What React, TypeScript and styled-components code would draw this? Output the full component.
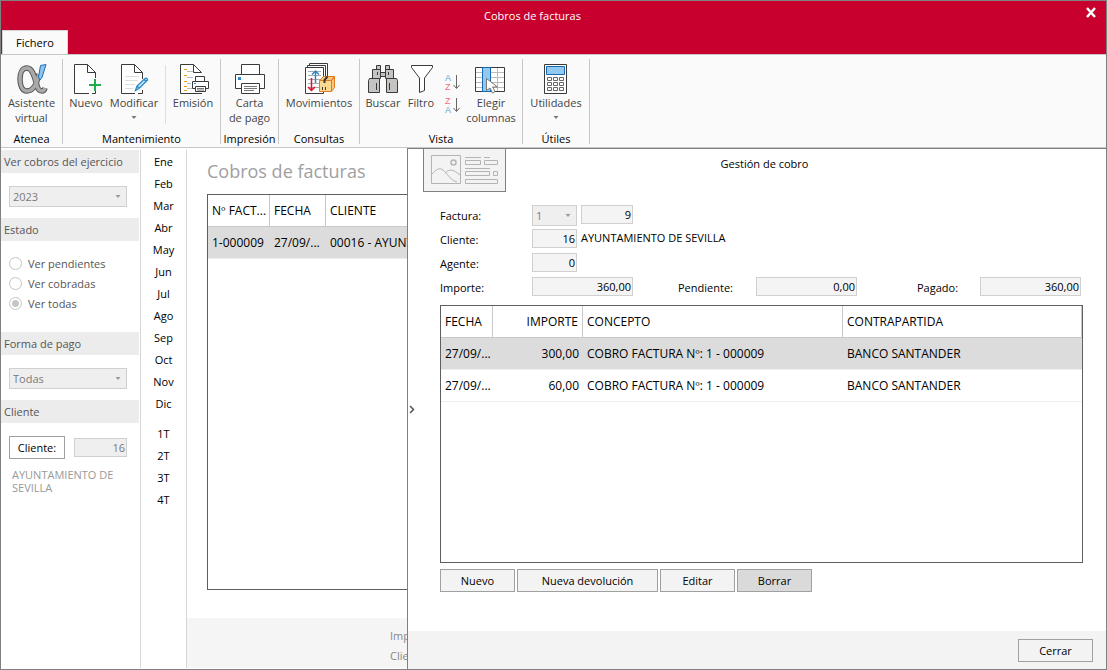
import React, { ReactNode } from 'react';
import styled, { createGlobalStyle } from 'styled-components';

const line = '#c8c8c8';
const frame = '#808080';
const ink = '#3a3a3a';

const GlobalStyle = createGlobalStyle`
  * { box-sizing: border-box; }
  body { margin: 0; }
  body, button, input, select {
    font-family: "Open Sans", "Noto Sans", sans-serif;
    font-size: 11px;
    line-height: 15px;
    color: #000;
  }
`;

const Window = styled.div`
  display: flex;
  flex-direction: column;
  min-height: 100vh;
  border: 1px solid ${frame};
  background: #fff;
`;

/* ---------- title bar and ribbon ---------- */

const TitleBar = styled.header`
  display: grid;
  grid-template-columns: 1fr auto 1fr;
  grid-template-rows: 29px 24px;
  background: #c8002d;
`;

const WindowTitle = styled.h1`
  grid-column: 2;
  margin: 0;
  padding-right: 42px;
  font-size: 11px;
  font-weight: 400;
  line-height: 29px;
  color: #fff;
`;

const CloseButton = styled.button`
  grid-column: 3;
  justify-self: end;
  align-self: start;
  display: flex;
  padding: 6px 9px;
  border: 0;
  background: none;
`;

const Tab = styled.button`
  grid-column: 1;
  grid-row: 2;
  justify-self: start;
  width: 66px;
  margin-left: 1px;
  border: 1px solid #d8d0d2;
  border-bottom: 0;
  background: #fafafa;
  padding: 0;
`;

const Ribbon = styled.div`
  display: flex;
  height: 94px;
  padding-top: 4px;
  border-top: 1px solid ${line};
  border-bottom: 1px solid ${line};
  background: #fafafa;
`;

const Group = styled.section`
  display: flex;
  flex-direction: column;
  justify-content: space-between;
  height: 85px;
  border-right: 1px solid ${line};
`;

const Tools = styled.div<{ $end?: number }>`
  display: flex;
  padding-top: 4px;
  padding-right: ${p => p.$end ?? 0}px;
`;

const GroupName = styled.h2`
  margin: 0;
  font-size: 11px;
  font-weight: 400;
  line-height: 11px;
  text-align: center;
  white-space: nowrap;
`;

const Tool = styled.button<{ $w: number }>`
  display: flex;
  flex-direction: column;
  align-items: center;
  width: ${p => p.$w}px;
  padding: 0;
  border: 0;
  background: none;
  color: #444;
  white-space: nowrap;
`;

const ToolSplit = styled.div`
  width: 1px;
  height: 59px;
  margin: 2px 0 0 6px;
  background: #dedede;
`;

const SortTools = styled.div`
  display: flex;
  flex-direction: column;
  align-items: center;
  gap: 5px;
  width: 31px;
  padding-top: 10px;
`;

const SortTool = styled.button`
  display: flex;
  padding: 0;
  border: 0;
  background: none;
`;

const Caret = () => (
  <svg width="7" height="15" viewBox="0 0 7 15"><path d="M.5 6h5L3 9z" fill="#777" /></svg>
);

/* ---------- body ---------- */

const Body = styled.div`
  flex: 1;
  display: grid;
  grid-template-columns: 140px 46px 220px minmax(0, 1fr);
`;

const Filters = styled.aside`
  margin: 2px 0 1px;
  border-right: 1px solid #d6d6d6;
`;

const FilterTitle = styled.h2`
  margin: 0 1px 0 0;
  padding-left: 3px;
  background: #ececec;
  font-size: 11px;
  font-weight: 400;
  line-height: 23px;
  color: #555;
`;

const FilterBody = styled.div<{ $top?: number; $bottom?: number }>`
  padding: ${p => p.$top ?? 13}px 13px ${p => p.$bottom ?? 11}px 8px;
`;

const SelectBox = styled.div<{ $w?: number }>`
  position: relative;
  flex: none;
  width: ${p => (p.$w ? p.$w + 'px' : '100%')};
  height: 21px;

  select {
    display: block;
    width: 100%;
    height: 100%;
    padding: 0 3px;
    border: 1px solid #d0d0d0;
    border-radius: 0;
    background: #efefef;
    color: #7a7a7a;
    opacity: 1;
    appearance: none;
  }

  svg {
    position: absolute;
    top: 3px;
    right: 5px;
    opacity: 0.7;
    pointer-events: none;
  }
`;

const RadioRow = styled.label`
  display: flex;
  align-items: center;
  gap: 6px;
  height: 20px;
  color: #555;
`;

const Radio = styled.input`
  appearance: none;
  width: 13px;
  height: 13px;
  margin: 0;
  border: 1px solid #c4c4c4;
  border-radius: 50%;
  background: #fff;

  &:checked {
    background: radial-gradient(circle, #c6c6c6 0 3px, #fff 4px);
  }
`;

const ClientRow = styled.div`
  display: flex;
  align-items: center;
  justify-content: space-between;
`;

const Button = styled.button<{ $w: number; $bg?: string }>`
  width: ${p => p.$w}px;
  height: 23px;
  padding: 0;
  border: 1px solid #a0a0a0;
  background: ${p => p.$bg ?? '#f3f3f3'};
`;

const Field = styled.input<{ $w: number; $muted?: boolean }>`
  flex: none;
  width: ${p => p.$w}px;
  height: 19px;
  padding: 0 1px 1px;
  border: 1px solid #d0d0d0;
  background: ${p => (p.$muted ? '#efefef' : '#f4f4f4')};
  color: ${p => (p.$muted ? '#7a7a7a' : '#000')};
  text-align: right;
`;

const ClientName = styled.p`
  margin: 9px 0 0 3px;
  line-height: 13px;
  color: #999;
`;

const Periods = styled.nav`
  display: flex;
  flex-direction: column;
  margin: 2px 0 1px;
  padding-top: 1px;
  border-right: 1px solid #d6d6d6;
  text-align: center;
`;

const Period = styled.a`
  line-height: 22px;
  color: #000;
  text-decoration: none;

  &.quarter { margin-top: 8px; }
`;

/* ---------- invoice list ---------- */

const List = styled.main`
  display: flex;
  flex-direction: column;
  overflow: hidden;
  padding-bottom: 1px;
`;

const ListTitle = styled.h2`
  margin: 0;
  padding: 11px 0 10px 20px;
  font-size: 18px;
  font-weight: 400;
  line-height: 25px;
  color: #a0a0a0;
`;

const Grid = styled.div`
  flex: 1;
  border: 1px solid #5f5f5f;
  background: #fff;
`;

const ListGrid = styled(Grid)`
  width: 400px;
  margin: 0 0 28px 20px;
`;

const ListFooter = styled.footer`
  height: 50px;
  padding: 8px 0 0 203px;
  background: #f5f5f5;
  color: #888;
  line-height: 20px;
  white-space: nowrap;
`;

const Table = styled.table`
  width: 100%;
  table-layout: fixed;
  border-collapse: separate;
  border-spacing: 0;

  th, td {
    height: 32px;
    padding: 0 0 0 4px;
    font-size: 12px;
    font-weight: 400;
    line-height: 16px;
    text-align: left;
    white-space: nowrap;
  }
  th {
    border-right: 1px solid ${line};
    border-bottom: 1px solid ${line};
  }
  td { border-bottom: 1px solid #eee; }
  tr.selected td { background: #dcdcdc; }
  th.amount, td.amount {
    padding-right: 4px;
    text-align: right;
  }
`;

/* ---------- payment panel ---------- */

const Panel = styled.section`
  display: flex;
  flex-direction: column;
  border: solid ${frame};
  border-width: 1px 0 0 1px;
  background: #fff;
`;

const PanelMain = styled.div`
  flex: 1;
  display: grid;
  grid-template-columns: 15px minmax(0, 1fr);
`;

const Collapse = styled.button`
  align-self: center;
  display: flex;
  margin-top: 38px;
  padding: 0 1px;
  border: 0;
  background: none;
`;

const PanelContent = styled.div`
  display: flex;
  flex-direction: column;
`;

const PanelHead = styled.div`
  display: grid;
  grid-template-columns: 83px 1fr 83px;
  margin-bottom: 13px;
`;

const Picture = styled.div`
  height: 43px;
  border: 1px solid ${frame};
  border-top: 0;
  background: #f3f3f3;
`;

const PanelTitle = styled.h2`
  margin: 0;
  font-size: 11px;
  font-weight: 400;
  line-height: 30px;
  text-align: center;
`;

const Form = styled.form`
  flex: 1;
  display: flex;
  flex-direction: column;
  padding: 0 23px 39px 17px;
`;

const FormRow = styled.div`
  display: flex;
  height: 24px;
`;

const Label = styled.label<{ $w: number; $gap?: number }>`
  flex: none;
  width: ${p => p.$w}px;
  margin-left: ${p => p.$gap ?? 0}px;
  line-height: 22px;
`;

const FieldPair = styled.div`
  display: flex;
  gap: 4px;
`;

const Output = styled.output`
  line-height: 18px;
`;

const PaymentsGrid = styled(Grid)`
  margin-top: 4px;
`;

const Actions = styled.div`
  display: flex;
  gap: 2px;
  margin-top: 6px;
`;

const PanelFooter = styled.footer`
  display: flex;
  justify-content: flex-end;
  height: 38px;
  padding: 8px 13px 0 0;
  background: #f3f3f3;
`;

/* ---------- icons ---------- */

const Icon = ({ children }: { children: ReactNode }) => (
  <svg width="32" height="32" viewBox="0 0 32 32" fill="none" stroke={ink} strokeWidth="1">
    {children}
  </svg>
);

const alpha = 'M28 25c-1 4-6 4-7.500-1C18 16 16 5 10 5 5 5 3 10 3 16s2 12 7 12c6 0 10-8 12-17';

const AlphaIcon = () => (
  <Icon>
    <path d={alpha} stroke="#555" strokeWidth="5.500" transform="translate(1 0)" />
    <path d={alpha} stroke="#a9a9a9" strokeWidth="3.500" transform="translate(1 0)" />
    <path d="M24.500 2.500l5.500-1L26 14.500l-2 2.500-1.500-3z" fill="#8cc4ee" stroke="#1f6fb5" />
  </Icon>
);

const NewIcon = () => (
  <Icon>
    <path d="M19 30.500H4.500v-29h13l8 8V15M25.500 28v2.500H22" fill="#fff" />
    <path d="M17.500 1.500v8h8" />
    <path d="M25 16v12M19 22h12" stroke="#1fab4e" strokeWidth="2" />
  </Icon>
);

const EditIcon = () => (
  <Icon>
    <path d="M17 30.500H3.500v-29h13l8 8V16M24.500 27v3.500H20" fill="#fff" />
    <path d="M16.500 1.500v8h8" />
    <path d="M7 13.500h14M7 17.500h13M7 21.500h10M7 25.500h8" stroke="#ddd" />
    <path d="M17.500 27.500l1.500-4.500 8-7.500q2-1 2.500 1.500l-8 8zM19 23l2.500 2.500M26 16.500l2.500 2.500" fill="#c9e4f7" stroke="#2a87c8" strokeWidth="1.300" />
  </Icon>
);

const IssueIcon = () => (
  <Icon>
    <path d="M25 30.500H3.500v-29h13l8 8" fill="#fff" />
    <path d="M16.500 1.500v8h8" />
    <path d="M7 6.500h3M7 12.500h3M7 18.500h3M7 23.500h3M7 27.500h3" stroke="#f09a1a" />
    <path d="M10 8.500h6M10 14.500h6M10 20.500h4M10 25.500h5" stroke="#bbb" />
    <path d="M18.500 18.500v-5h9v5M18.500 25.500h-3v-7h16v7h-3" fill="#fff" />
    <path d="M18.500 23.500h10v5h-10z" fill="#fff" />
    <path d="M20 25.500h7M20 27h7" stroke="#777" />
    <path d="M17 20.500h2" stroke="#2a87c8" />
  </Icon>
);

const PrinterIcon = () => (
  <Icon>
    <path d="M7.500 11.500v-10h18v10M7.500 25.500h-6v-14h29v14h-5" fill="#fff" />
    <path d="M7.500 20.500h18v10h-18z" fill="#fff" />
    <path d="M10 23.500h13M10 25.500h13M10 27.500h10" stroke="#777" />
    <path d="M4 14h3v3H4z" fill="#2a87c8" stroke="none" />
  </Icon>
);

const MovesIcon = () => (
  <Icon>
    <path d="M6.500 3V.5h18V14M4.500 5V2.500h18V14" fill="#fff" />
    <path d="M2.500 4.500h18v26h-18z" fill="#fff" />
    <path d="M5 8.500h13M5 12.500h13M5 16.500h13M5 20.500h11M5 24.500h11" stroke="#aaa" />
    <path d="M12.500 20V8M9 11.500L12.500 8l3.500 3.500" stroke="#2a87c8" strokeWidth="1.500" />
    <path d="M8.500 15v12.500M5 24l3.500 3.500L12 24" stroke="#e0112d" strokeWidth="1.500" />
    <path d="M16.500 17.500l4-4h11l-3 4zM28.500 17.500l3-4v11l-3 4z" fill="#f9c67a" stroke="#e07a22" />
    <path d="M16.500 17.500h12v11h-12z" fill="#fbd88f" stroke="#e07a22" />
    <path d="M21.500 20v-3l3-3.500" strokeWidth="2" />
    <path d="M19.500 24v3M22.500 24v3" />
  </Icon>
);

const BinocularsIcon = () => (
  <Icon>
    <g fill="#c6c4c3">
      <path d="M9.500 2.500h4v4h-4zM18.500 2.500h4v4h-4zM13.500 9.500h5v4h-5z" />
      <path d="M5.500 6.500h8v9h-8zM18.500 6.500h8v9h-8z" />
      <path d="M2.500 15.500h10v14h-11v-12zM19.500 15.500h10l1 2v12h-11z" />
    </g>
    <path d="M9.500 20v7M22.500 20v7M10.500 9v3M21.500 9v3" />
  </Icon>
);

const FilterIcon = () => (
  <Icon>
    <path d="M6.500 2.500h21v2l-8 10.500v12.500l-5 2V15L6.500 4.500z" fill="#fff" />
  </Icon>
);

const SortIcon = ({ top, bottom }: { top: 'A' | 'Z'; bottom: 'A' | 'Z' }) => (
  <svg width="18" height="18" viewBox="0 0 18 18" fontFamily="Liberation Sans" fontSize="9">
    <text x="2" y="8" fill={top === 'A' ? '#5ba3d6' : '#f07078'}>{top}</text>
    <text x="2" y="17" fill={bottom === 'A' ? '#5ba3d6' : '#f07078'}>{bottom}</text>
    <path d="M13.500 2v13M10.500 12l3 3.500 3-3.500" fill="none" stroke="#666" />
  </svg>
);

const ColumnsIcon = () => (
  <Icon>
    <path d="M.5 4.500h29v24H.5z" fill="#fff" />
    <path d="M1 9.500h28M1 14.500h28M1 19.500h28M1 24.500h28M22.500 5v23" stroke="#bbb" />
    <path d="M7.500 4.500h8v24h-8z" fill="#92c9f1" stroke="#1769b3" />
    <path d="M11.500 15.500v12l3.500-2.500 2.500 5 2.500-1.500-2.500-4.500h5z" fill="#fff" stroke="#777" />
  </Icon>
);

const CalculatorIcon = () => (
  <Icon>
    <path d="M4.500 1.500h22v29h-22z" fill="#fff" />
    <path d="M6.500 3.500h18v8h-18z" fill="#92c9f1" stroke="#1769b3" />
    {[14.5, 19.5, 24.5].map(y => (
      <path key={y} d={`M7.500 ${y}h4v3h-4zM13.500 ${y}h4v3h-4zM19.500 ${y}h4v3h-4z`} stroke="#666" />
    ))}
  </Icon>
);

const PictureIcon = () => (
  <svg width="81" height="42" viewBox="0 0 81 42" fill="none" stroke="#b4b4b4">
    <path d="M7.500 6.500h29v28h-29z" />
    <circle cx="29.500" cy="13.500" r="2.500" strokeWidth="1.500" />
    <path d="M8 25c4-4 7-7 11-4s7 10 14 12M21 24c5-5 9-3 15 2" />
    <path d="M41 8.500h16M60 8.500h6M41.500 11.500h15v4h-15zM60.500 11.500h13v4h-13zM41 19.500h25M41.500 22.500h24v4h-24zM69.500 22.500h4v4h-4zM41.500 30.500h32v4h-32z" />
  </svg>
);

const months = ['Ene', 'Feb', 'Mar', 'Abr', 'May', 'Jun', 'Jul', 'Ago', 'Sep', 'Oct', 'Nov', 'Dic'];
const quarters = ['1T', '2T', '3T', '4T'];
const states = ['Ver pendientes', 'Ver cobradas', 'Ver todas'];
const payments = [
  { date: '27/09/...', amount: '300,00' },
  { date: '27/09/...', amount: '60,00' },
];

export default function App() {
  return (
    <Window>
      <GlobalStyle />
      <TitleBar>
        <WindowTitle>Cobros de facturas</WindowTitle>
        <CloseButton aria-label="Cerrar ventana">
          <svg width="12" height="11" viewBox="0 0 12 11">
            <path d="M2 1l8 9M10 1L2 10" stroke="#fff" strokeWidth="2.500" />
          </svg>
        </CloseButton>
        <Tab>Fichero</Tab>
      </TitleBar>

      <Ribbon>
        <Group>
          <Tools>
            <Tool $w={61}><AlphaIcon />Asistente<span>virtual</span></Tool>
          </Tools>
          <GroupName>Atenea</GroupName>
        </Group>
        <Group>
          <Tools>
            <Tool $w={46}><NewIcon />Nuevo</Tool>
            <Tool $w={50}><EditIcon />Modificar<Caret /></Tool>
            <ToolSplit />
            <Tool $w={54}><IssueIcon />Emisión</Tool>
          </Tools>
          <GroupName>Mantenimiento</GroupName>
        </Group>
        <Group>
          <Tools>
            <Tool $w={57}><PrinterIcon />Carta<span>de pago</span></Tool>
          </Tools>
          <GroupName>Impresión</GroupName>
        </Group>
        <Group>
          <Tools>
            <Tool $w={80}><MovesIcon />Movimientos</Tool>
          </Tools>
          <GroupName>Consultas</GroupName>
        </Group>
        <Group>
          <Tools $end={7}>
            <Tool $w={46}><BinocularsIcon />Buscar</Tool>
            <Tool $w={30}><FilterIcon />Filtro</Tool>
            <SortTools>
              <SortTool aria-label="Orden ascendente"><SortIcon top="A" bottom="Z" /></SortTool>
              <SortTool aria-label="Orden descendente"><SortIcon top="Z" bottom="A" /></SortTool>
            </SortTools>
            <Tool $w={48}><ColumnsIcon />Elegir<span>columnas</span></Tool>
          </Tools>
          <GroupName>Vista</GroupName>
        </Group>
        <Group>
          <Tools>
            <Tool $w={66}><CalculatorIcon />Utilidades<Caret /></Tool>
          </Tools>
          <GroupName>Útiles</GroupName>
        </Group>
      </Ribbon>

      <Body>
        <Filters>
          <FilterTitle>Ver cobros del ejercicio</FilterTitle>
          <FilterBody>
            <SelectBox>
              <select aria-label="Ejercicio" disabled><option>2023</option></select>
              <Caret />
            </SelectBox>
          </FilterBody>
          <FilterTitle>Estado</FilterTitle>
          <FilterBody $top={12} $bottom={19}>
            {states.map((s, i) => (
              <RadioRow key={s}>
                <Radio type="radio" name="estado" defaultChecked={i === 2} disabled />
                {s}
              </RadioRow>
            ))}
          </FilterBody>
          <FilterTitle>Forma de pago</FilterTitle>
          <FilterBody>
            <SelectBox>
              <select aria-label="Forma de pago" disabled><option>Todas</option></select>
              <Caret />
            </SelectBox>
          </FilterBody>
          <FilterTitle>Cliente</FilterTitle>
          <FilterBody>
            <ClientRow>
              <Button $w={56} $bg="#fff">Cliente:</Button>
              <Field $w={53} $muted aria-label="Cliente" defaultValue="16" readOnly />
            </ClientRow>
            <ClientName>AYUNTAMIENTO DE SEVILLA</ClientName>
          </FilterBody>
        </Filters>

        <Periods>
          {months.map(m => <Period key={m} href="#">{m}</Period>)}
          {quarters.map((q, i) => (
            <Period key={q} href="#" className={i === 0 ? 'quarter' : undefined}>{q}</Period>
          ))}
        </Periods>

        <List>
          <ListTitle>Cobros de facturas</ListTitle>
          <ListGrid>
            <Table>
              <colgroup><col style={{ width: 62 }} /><col style={{ width: 56 }} /><col /></colgroup>
              <thead>
                <tr><th>Nº FACT...</th><th>FECHA</th><th>CLIENTE</th></tr>
              </thead>
              <tbody>
                <tr className="selected">
                  <td>1-000009</td><td>27/09/...</td><td>00016 - AYUNT</td>
                </tr>
              </tbody>
            </Table>
          </ListGrid>
          <ListFooter>
            <div>Importe:</div>
            <div>Cliente:</div>
          </ListFooter>
        </List>

        <Panel>
          <PanelMain>
            <Collapse aria-label="Contraer">
              <svg width="6" height="9" viewBox="0 0 6 9"><path d="M1 1l3.500 3.500L1 8" fill="none" stroke="#555" strokeWidth="1.500" /></svg>
            </Collapse>
            <PanelContent>
              <PanelHead>
                <Picture><PictureIcon /></Picture>
                <PanelTitle>Gestión de cobro</PanelTitle>
              </PanelHead>
              <Form onSubmit={e => e.preventDefault()}>
                <FormRow>
                  <Label $w={92} htmlFor="serie">Factura:</Label>
                  <FieldPair>
                    <SelectBox $w={45}>
                      <select id="serie" disabled><option>1</option></select>
                      <Caret />
                    </SelectBox>
                    <Field $w={52} aria-label="Número" defaultValue="9" readOnly />
                  </FieldPair>
                </FormRow>
                <FormRow>
                  <Label $w={92} htmlFor="cliente">Cliente:</Label>
                  <FieldPair>
                    <Field $w={45} id="cliente" defaultValue="16" readOnly />
                    <Output>AYUNTAMIENTO DE SEVILLA</Output>
                  </FieldPair>
                </FormRow>
                <FormRow>
                  <Label $w={92} htmlFor="agente">Agente:</Label>
                  <Field $w={45} id="agente" defaultValue="0" readOnly />
                </FormRow>
                <FormRow>
                  <Label $w={92} htmlFor="importe">Importe:</Label>
                  <Field $w={101} id="importe" defaultValue="360,00" readOnly />
                  <Label $w={78} $gap={45} htmlFor="pendiente">Pendiente:</Label>
                  <Field $w={101} id="pendiente" defaultValue="0,00" readOnly />
                  <Label $w={63} $gap={60} htmlFor="pagado">Pagado:</Label>
                  <Field $w={101} id="pagado" defaultValue="360,00" readOnly />
                </FormRow>
                <PaymentsGrid>
                  <Table>
                    <colgroup>
                      <col style={{ width: 52 }} /><col style={{ width: 90 }} />
                      <col style={{ width: 260 }} /><col />
                    </colgroup>
                    <thead>
                      <tr>
                        <th>FECHA</th><th className="amount">IMPORTE</th>
                        <th>CONCEPTO</th><th>CONTRAPARTIDA</th>
                      </tr>
                    </thead>
                    <tbody>
                      {payments.map((p, i) => (
                        <tr key={i} className={i === 0 ? 'selected' : undefined}>
                          <td>{p.date}</td>
                          <td className="amount">{p.amount}</td>
                          <td>COBRO FACTURA Nº: 1 - 000009</td>
                          <td>BANCO SANTANDER</td>
                        </tr>
                      ))}
                    </tbody>
                  </Table>
                </PaymentsGrid>
                <Actions>
                  <Button type="button" $w={75}>Nuevo</Button>
                  <Button type="button" $w={141}>Nueva devolución</Button>
                  <Button type="button" $w={75}>Editar</Button>
                  <Button type="button" $w={75} $bg="#dadada">Borrar</Button>
                </Actions>
              </Form>
            </PanelContent>
          </PanelMain>
          <PanelFooter>
            <Button $w={75}>Cerrar</Button>
          </PanelFooter>
        </Panel>
      </Body>
    </Window>
  );
}
